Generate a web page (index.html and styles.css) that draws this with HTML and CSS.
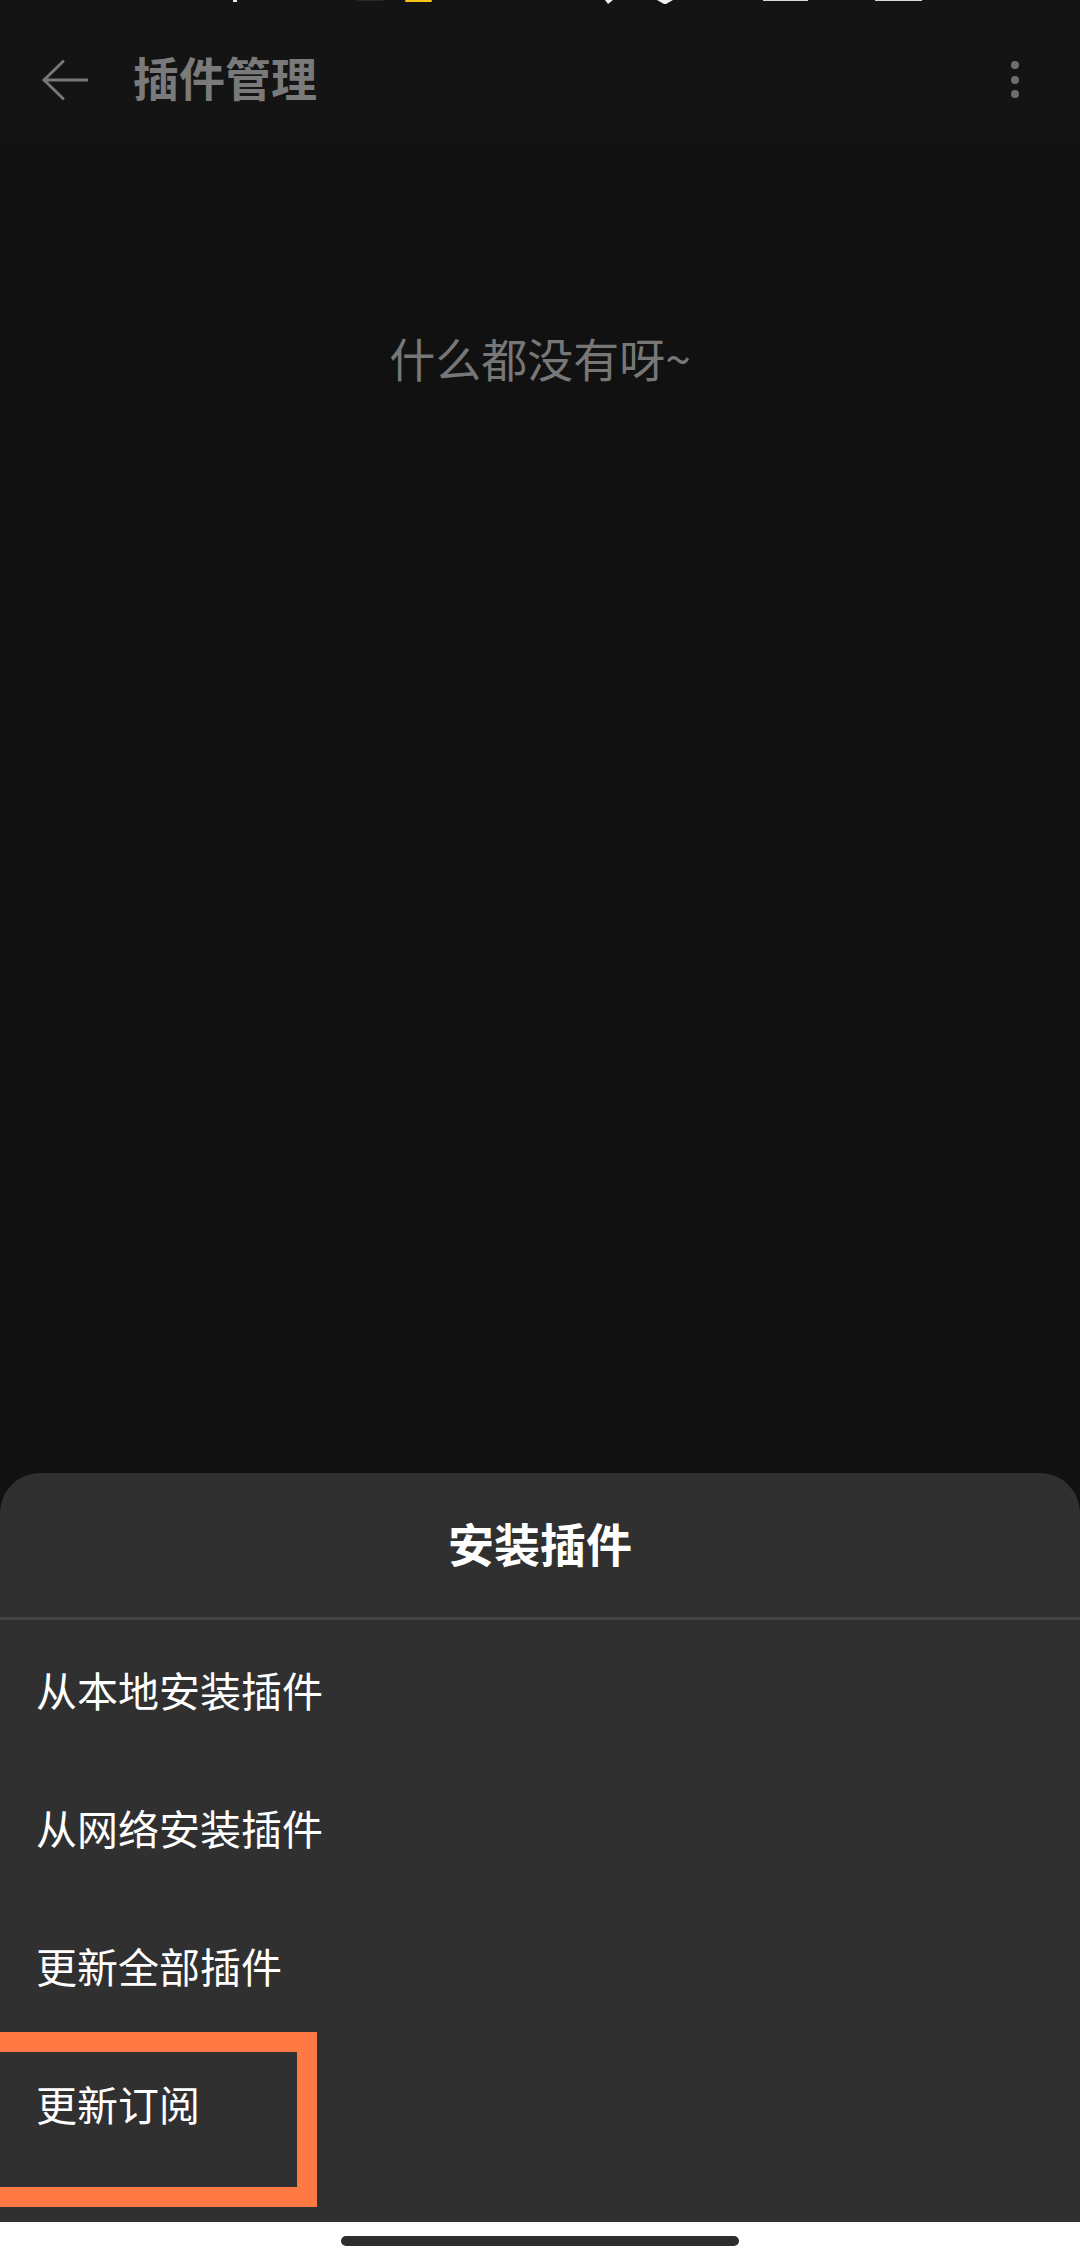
FILE: index.html
```html
<!DOCTYPE html>
<html lang="zh-CN">
    <head>
        <meta charset="UTF-8" />
        <meta name="viewport" content="width=device-width, initial-scale=1.0" />
        <title>插件管理</title>
        <link rel="stylesheet" href="styles.css">
    </head>
    <body>
        <header class="topbar">
            <!-- 状态栏只露出一点点 -->
            <svg class="status-peek" width="1080" height="6" viewBox="0 0 1080 6">
                <rect x="233" y="0" width="4" height="2" fill="#e8e8e8" />
                <rect x="357" y="0" width="26" height="1" fill="#2a2a2a" />
                <rect x="405" y="0" width="27" height="2" rx="1" fill="#f5c518" />
                <path d="M605 0 L613 0 L608 4 Z" fill="#f0f0f0" />
                <path d="M657 0 L673 0 L666 4 L664 4 Z" fill="#f0f0f0" />
                <rect x="763" y="0" width="45" height="1" fill="#d8d8d8" />
                <rect x="875" y="0" width="47" height="1" fill="#d8d8d8" />
            </svg>
            <button class="back" aria-label="返回">
                <svg width="46" height="40" viewBox="0 0 46 40" fill="none" stroke="#777" stroke-width="3" stroke-linecap="round" stroke-linejoin="round">
                    <line x1="2" y1="20" x2="45" y2="20" />
                    <polyline points="21,1.5 2,20 21,38.5" />
                </svg>
            </button>
            <h1 class="title">插件管理</h1>
            <button class="more" aria-label="更多">
                <span></span>
                <span></span>
                <span></span>
            </button>
        </header>

        <main class="content">
            <p class="empty">什么都没有呀~</p>
        </main>

        <section class="sheet">
            <div class="sheet-title">安装插件</div>
            <ul class="sheet-list">
                <li>从本地安装插件</li>
                <li>从网络安装插件</li>
                <li>更新全部插件</li>
                <li class="marked">更新订阅</li>
            </ul>
        </section>

        <footer class="navbar">
            <div class="home-pill"></div>
        </footer>
    </body>
</html>
```

FILE: styles.css
```css
html,
body {
    margin: 0;
    padding: 0;
}
body {
    width: 1080px;
    height: 2266px;
    overflow: hidden;
    background: #111111;
    font-family: "Noto Sans CJK SC", "Noto Sans", sans-serif;
    display: flex;
    flex-direction: column;
}
.topbar {
    position: relative;
    height: 143px;
    box-sizing: border-box;
    padding: 16px 61px 0 42px;
    background: #141414;
    display: flex;
    align-items: center;
    flex-shrink: 0;
}
.status-peek {
    position: absolute;
    top: 0;
    left: 0;
}
.back,
.more {
    background: none;
    border: none;
    padding: 0;
    cursor: pointer;
}
.back {
    display: flex;
    width: 46px;
    height: 40px;
}
.title {
    margin: 0 0 8px 45px;
    font-size: 46px;
    font-weight: 700;
    color: #7a7a7a;
    line-height: 60px;
    flex: 1;
}
.more {
    display: flex;
    flex-direction: column;
    gap: 6.5px;
}
.more span {
    display: block;
    width: 8px;
    height: 8px;
    border-radius: 50%;
    background: #6e6e6e;
}
.content {
    flex: 1;
    display: flex;
    flex-direction: column;
    align-items: center;
}
.empty {
    margin: 184px 0 0;
    font-size: 46px;
    line-height: 60px;
    color: #777777;
}
.sheet {
    flex-shrink: 0;
    background: #303030;
    border-radius: 40px 40px 0 0;
    padding-bottom: 50px;
}
.sheet-title {
    height: 147px;
    box-sizing: border-box;
    padding-bottom: 6px;
    display: flex;
    align-items: center;
    justify-content: center;
    font-size: 46px;
    font-weight: 700;
    color: #ffffff;
    border-bottom: 3px solid #444444;
}
.sheet-list {
    list-style: none;
    margin: 0;
    padding: 0;
}
.sheet-list li {
    height: 138px;
    display: flex;
    align-items: center;
    padding-left: 36px;
    font-size: 41px;
    color: #ffffff;
}
.sheet-list li.marked {
    position: relative;
}
/* 标注框 */
.marked::after {
    content: "";
    position: absolute;
    top: -2px;
    left: -40px;
    width: 317px;
    height: 135px;
    border: 20px solid #ff7944;
}
.navbar {
    flex-shrink: 0;
    height: 44px;
    background: #ffffff;
    display: flex;
    justify-content: center;
}
.home-pill {
    margin-top: 14px;
    width: 398px;
    height: 10px;
    border-radius: 5px;
    background: #2e2e2e;
}
```
